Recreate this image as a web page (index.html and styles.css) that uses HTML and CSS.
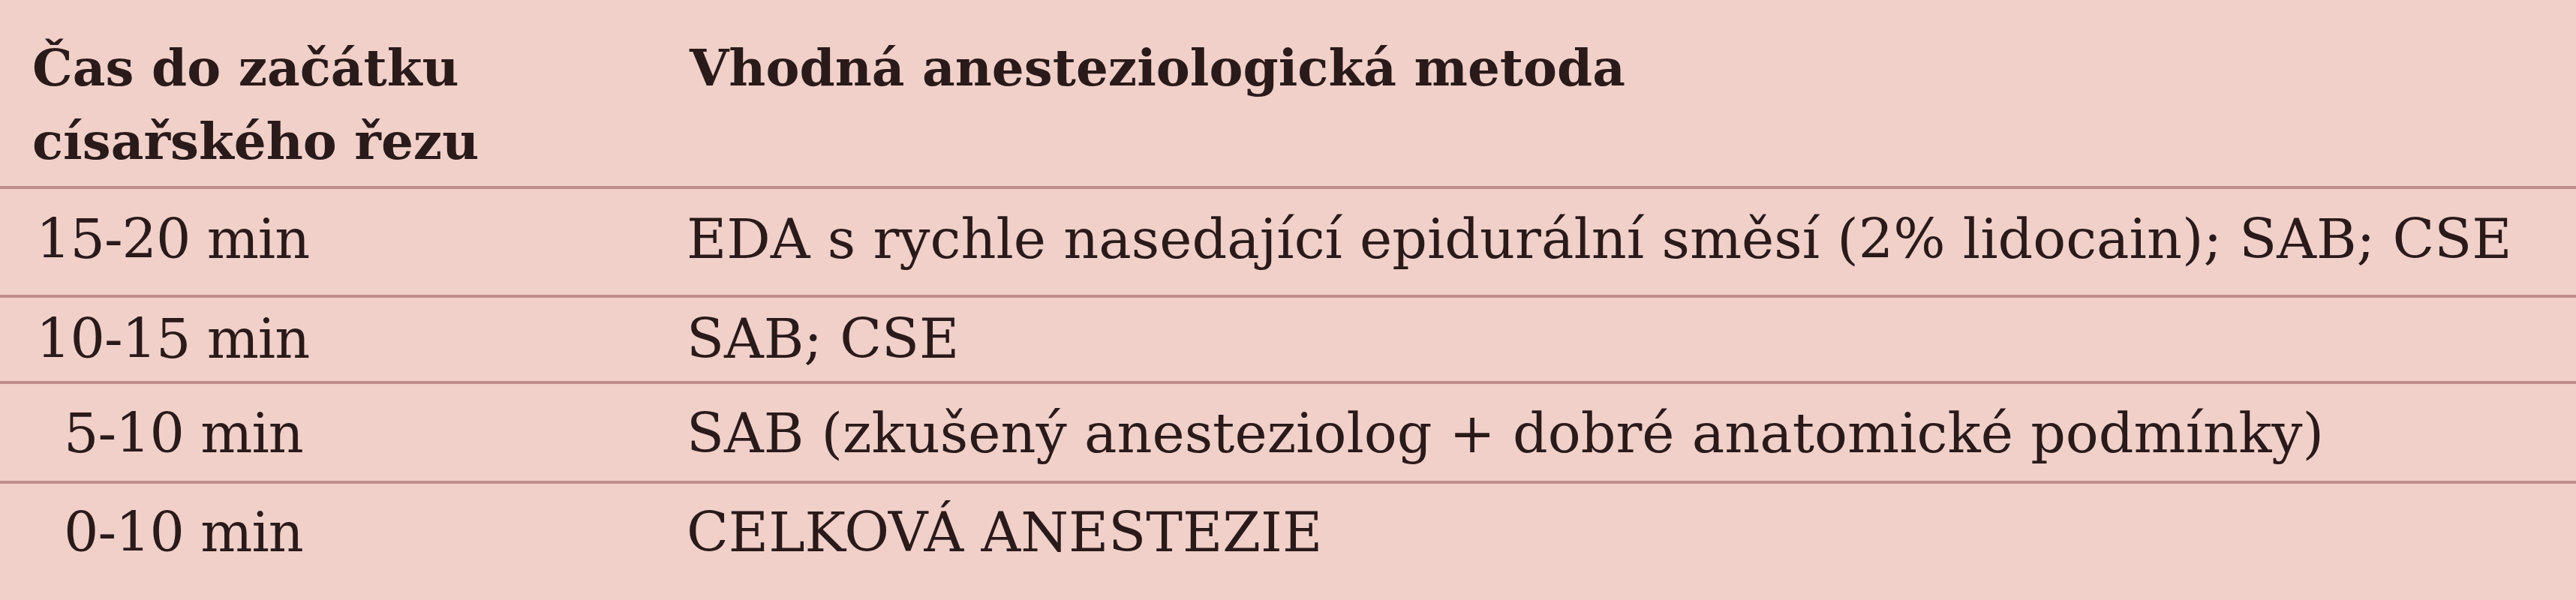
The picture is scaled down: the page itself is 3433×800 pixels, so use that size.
FILE: index.html
```html
<!DOCTYPE html>
<html lang="cs">
<head>
<meta charset="utf-8">
<title>Čas do začátku císařského řezu</title>
<link rel="stylesheet" href="styles.css">
</head>
<body>
<div class="table">
  <div class="row head">
    <div class="cell c1">Čas do začátku<br>císařského řezu</div>
    <div class="cell c2">Vhodná anesteziologická metoda</div>
  </div>
  <div class="row r1">
    <div class="cell c1">15-20 min</div>
    <div class="cell c2">EDA s rychle nasedající epidurální směsí (2% lidocain); SAB; CSE</div>
  </div>
  <div class="row r2">
    <div class="cell c1">10-15 min</div>
    <div class="cell c2">SAB; CSE</div>
  </div>
  <div class="row r3">
    <div class="cell c1 indent">5-10 min</div>
    <div class="cell c2">SAB (zkušený anesteziolog + dobré anatomické podmínky)</div>
  </div>
  <div class="row r4">
    <div class="cell c1 indent">0-10 min</div>
    <div class="cell c2">CELKOVÁ ANESTEZIE</div>
  </div>
</div>
</body>
</html>
```

FILE: styles.css
```css
html, body {
  margin: 0;
  padding: 0;
  background: #f1d0ca;
}
body {
  width: 3433px;
  height: 800px;
  overflow: hidden;
  color: #2a1a1a;
  font-family: "DejaVu Serif", "Liberation Serif", serif;
}
.table {
  display: flex;
  flex-direction: column;
  height: 800px;
}
.row {
  display: grid;
  grid-template-columns: 915px 1fr;
  box-sizing: content-box;
  border-bottom: 4px solid #c08e8d;
  font-size: 73px;
  line-height: 73px;
  white-space: nowrap;
}
.row .c1 { padding-left: 48px; letter-spacing: -1px; }
.row .c1.indent { padding-left: 85px; }
.head {
  height: 206px;
  padding-top: 42px;
  font-size: 67.5px;
  line-height: 98px;
  font-weight: bold;
}
.head .c1 { padding-left: 43px; letter-spacing: 0; }
.head .c2 { padding-left: 4px; }
.r1 { height: 111px; padding-top: 30px; }
.r2 { height: 93px; padding-top: 18px; }
.r3 { height: 100px; padding-top: 29px; }
.r4 { flex: 1; padding-top: 28px; border-bottom: none; }
```
